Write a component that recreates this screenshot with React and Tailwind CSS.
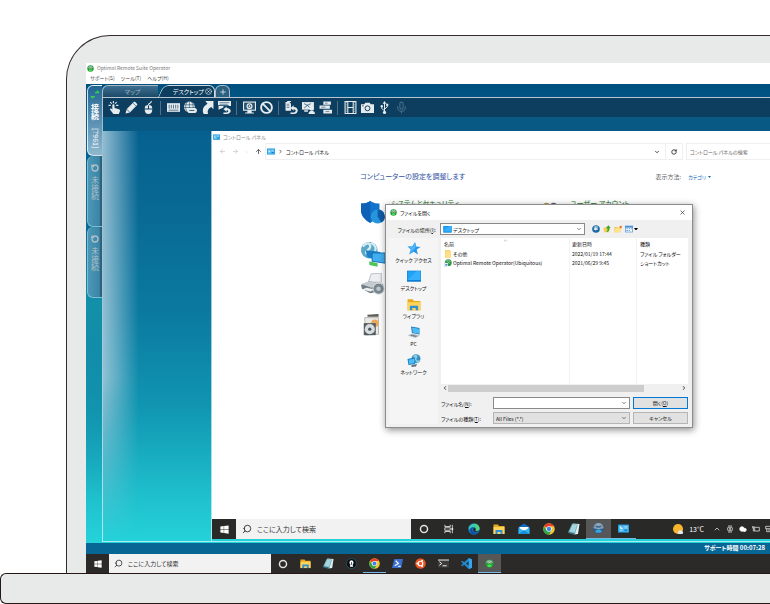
// src/App.jsx

import React, { useState } from 'react';
import {
    ArrowLeft, ArrowRight, ArrowUp, Ban, ChevronDown, ChevronRight, ChevronUp,
    ChevronLeft, Cloud, Mic, Plus, RotateCw, Search, X, XCircle,
} from 'lucide-react';

/* ---------- Small drawings ---------- */

const Windows = ({ className }) => (
    <svg viewBox="0 0 24 24" className={className} fill="#fff">
        <path d="M1 4l9-1.3v8.8H1zM11 2.5L23 1v10.5H11zM1 12.5h9v8.8L1 20zM11 12.5h12V23l-12-1.6z" />
    </svg>
);

const GreenBall = ({ className }) => (
    <svg viewBox="0 0 24 24" className={className}>
        <circle cx="12" cy="12" r="11" fill="#1d9a35" />
        <path d="M2 9a11 11 0 0 1 20 0c-6 4-14 4-20 0z" fill="#6f9a78" />
        <path d="M4 9c4-5 12-5 16 0M7 5l10 8M17 5L7 13" stroke="#d9ecd9" strokeWidth="1.2" fill="none" />
        <ellipse cx="12" cy="18" rx="6" ry="3.5" fill="#4be04f" />
    </svg>
);

const BlueBall = ({ className }) => (
    <svg viewBox="0 0 24 24" className={className}>
        <circle cx="12" cy="12" r="11" fill="#1e5f94" />
        <path d="M1 11a11 11 0 0 1 22 0c-6 4-16 4-22 0z" fill="#89a9c4" />
        <path d="M3 8h18M6 5l12 7M18 5L6 12" stroke="#34506b" strokeWidth="1.2" fill="none" />
        <ellipse cx="12" cy="18" rx="7" ry="3.5" fill="#3da5dc" />
    </svg>
);

const Panel = ({ className }) => (
    <svg viewBox="0 0 24 20" className={className}>
        <rect y="1" width="24" height="18" rx="1" fill="#1d8fd1" />
        <rect x="1.5" y="3" width="21" height="14" fill="#4dbdf3" />
        <circle cx="7.500" cy="8" r="3.500" fill="#d8f0fc" />
        <path d="M7.500 8V4.500A3.500 3.500 0 0 1 11 8z" fill="#1470b8" />
        <path d="M14 6h6M14 9h6M4 14.500h6" stroke="#d8f0fc" strokeWidth="1.200" />
        <rect x="14" y="12" width="6" height="3" fill="#1470b8" />
    </svg>
);

const Desktop = ({ className }) => (
    <svg viewBox="0 0 24 20" className={className}>
        <rect width="24" height="19" fill="#0f7fd6" />
        <path d="M1 1h22v15H1z" fill="#1ea1f6" />
        <path d="M1 16L16 1h7v15z" fill="#36b0fb" />
    </svg>
);

const Folder = ({ className }) => (
    <svg viewBox="0 0 24 22" className={className}>
        <path d="M1 2h9l2 3h11v16H1z" fill="#e8a91c" />
        <path d="M1 7h22v14H1z" fill="#fdd35a" />
        <path d="M5 21v-8h14v8h-4v-4H9v4z" fill="#2f8fd8" />
    </svg>
);

const PlainFolder = ({ className }) => (
    <svg viewBox="0 0 24 24" className={className}>
        <path d="M3 1h14l3 3v19H3z" fill="#f3c74e" />
        <path d="M4 4h15v12l2 2v5H4z" fill="#ffe08a" />
    </svg>
);

const Shortcut = ({ className }) => (
    <svg viewBox="0 0 24 24" className={className}>
        <circle cx="13" cy="11" r="10" fill="#1f9440" />
        <path d="M5 8c5-6 12-5 16 0M8 5l10 9M18 5l-7 9" stroke="#c8e2cf" strokeWidth="1.500" fill="none" />
        <rect x="1" y="12" width="11" height="11" fill="#fff" stroke="#9bb" />
        <path d="M3 21c0-4 2-5 5-5v-2l3 3.500-3 3.500v-2c-2 0-3 0-5 2z" fill="#2665c5" />
    </svg>
);

const Star = ({ className }) => (
    <svg viewBox="0 0 24 24" className={className}>
        <path d="M14 0l2 8.500 8 .5-7 5 2 9-7.500-5L3 23l3-9-6-5.500L9 8z" fill="#2597ea" />
        <path d="M14 2l1 8-5 6-6 5 3-8-5-4 8-.5z" fill="#52b5f6" />
    </svg>
);

const Pc = ({ className }) => (
    <svg viewBox="0 0 28 24" className={className}>
        <path d="M8 0l17 3v13L10 13z" fill="#1676b9" />
        <path d="M10 2l14 2.500v10L11.500 12z" fill="#4fbdf5" />
        <path d="M10 14l16 4-9 5L1 18z" fill="#b9c4cc" />
        <path d="M9 16l12 3-4 2-11-3z" fill="#76848f" />
    </svg>
);

const Network = ({ className }) => (
    <svg viewBox="0 0 28 26" className={className}>
        <circle cx="18" cy="9.500" r="9" fill="#328fc2" />
        <path d="M12 4c4-4 8-3 9 0s-3 4-2 7 6 2 7 0-1 8-6 7z" fill="#8ccbdc" />
        <path d="M1 10l15-3v13L3 22z" fill="#1679bf" />
        <path d="M3 11.500l12-2.500v9.500L4.500 20z" fill="#4dbbf6" />
        <path d="M9 22l11-2-2 5-9 1z" fill="#5c7482" />
    </svg>
);

const Edge = ({ className }) => (
    <svg viewBox="0 0 24 24" className={className}>
        <circle cx="12" cy="12" r="11.500" fill="#1678c8" />
        <path d="M1.500 9C4-1 21-2 23 10c.5 5-4 7-8 5 2-3 0-7-4-7-5 0-7 3-9.500 5z" fill="#3bc8b0" />
        <path d="M13 1c6 1 10 5 10 9.500 0 4-4 6-8 4.500 2-3 2-8-2-14z" fill="#62d65b" opacity=".75" />
        <path d="M11 9c-5 2-3 11 6 11 2 0 4-1 5-2-5 8-20 5-17-5 1-3 4-4 6-4z" fill="#0b4f9c" />
        <path d="M12 9.500c3 0 4 3 2.500 6 3 2 6 1 8 0-3 4-12 4-12-2 0-2 .5-3 1.500-4z" fill="#262626" />
    </svg>
);

const Mail = ({ className }) => (
    <svg viewBox="0 0 24 22" className={className}>
        <path d="M1 7l11-7 11 7v14H1z" fill="#0f6cbd" />
        <path d="M3 7h18v4l-9 5-9-5z" fill="#fff" />
        <path d="M1 8l11 7 11-7v13H1z" fill="#35b4ee" />
        <path d="M1 21l11-8 11 8z" fill="#1690d8" />
    </svg>
);

const Chrome = ({ className }) => (
    <svg viewBox="0 0 24 24" className={className}>
        <circle cx="12" cy="12" r="11.500" fill="#f6c52d" />
        <path d="M12 12L2 6.500A11.500 11.500 0 0 1 22 6.500H12z" fill="#e5402f" />
        <path d="M2 6.500A11.500 11.500 0 0 0 12 23.500l5-9-5 2-5-2z" fill="#2da44f" />
        <circle cx="12" cy="12" r="5.500" fill="#fff" />
        <circle cx="12" cy="12" r="4.300" fill="#3f80ee" />
    </svg>
);

const Notebook = ({ className }) => (
    <svg viewBox="0 0 24 24" className={className}>
        <path d="M9 1l14 1-3 20-8 1z" fill="#e7eef0" />
        <path d="M8 2l12 1-6 19L0 19z" fill="#6fb0bd" />
        <path d="M9 3l9 1-5 15-10-2z" fill="#a5d5dd" />
        <path d="M1 18l13 3-1 3L0 20z" fill="#3a6c7c" />
    </svg>
);

const TaskView = ({ className }) => (
    <svg viewBox="0 0 24 24" className={className} fill="none" stroke="#e8e8e8" strokeWidth="2">
        <path d="M2 2v4h13V2M2 22v-4h13v4M2 9h13v6H2zM20 2v20" />
        <path d="M18 10h4v4h-4z" fill="#fff" stroke="none" />
    </svg>
);

const Ring = ({ className }) => (
    <svg viewBox="0 0 24 24" className={className} fill="none" stroke="#e4e4e4" strokeWidth="3.500">
        <circle cx="12" cy="12" r="8.500" />
    </svg>
);

const KeyApp = ({ className }) => (
    <svg viewBox="0 0 24 24" className={className}>
        <circle cx="12" cy="12" r="11" fill="#0b0f11" stroke="#24535e" strokeWidth="2" />
        <path d="M12 5a5 5 0 0 1 2.500 9l1 5h-7l1-5A5 5 0 0 1 12 5z" fill="#fff" />
        <path d="M12 9v6" stroke="#0b0f11" strokeWidth="1.500" />
    </svg>
);

const PowerShell = ({ className }) => (
    <svg viewBox="0 0 24 24" className={className}>
        <path d="M5 2h19l-4 20H0z" fill="#3a6fd0" />
        <path d="M8 6l6 6-8 5M13 18h6" stroke="#fff" strokeWidth="2.500" fill="none" />
    </svg>
);

const Ubuntu = ({ className }) => (
    <svg viewBox="0 0 24 24" className={className}>
        <circle cx="12" cy="12" r="11.500" fill="#e95420" />
        <circle cx="12" cy="12" r="5" fill="none" stroke="#fff" strokeWidth="2.500" />
        <g fill="#fff"><circle cx="5" cy="12" r="2" /><circle cx="15.500" cy="6" r="2" /><circle cx="15.500" cy="18" r="2" /></g>
    </svg>
);

const Terminal = ({ className }) => (
    <svg viewBox="0 0 24 24" className={className}>
        <path d="M0 3h24v18H0z" fill="#3c3c3c" />
        <path d="M0 3h24v3H0z" fill="#b8b8b8" />
        <path d="M3 8l5 4-5 4M10 17h9" stroke="#fff" strokeWidth="2" fill="none" />
    </svg>
);

const VsCode = ({ className }) => (
    <svg viewBox="0 0 24 24" className={className}>
        <path d="M17 0l7 3v18l-7 3L7 14.500 2.500 18 0 16.500 4.500 12 0 7.500 2.500 6 7 9.500zm0 7l-6 5 6 5z" fill="#1f8ad2" />
        <path d="M17 0l7 3v18l-7 3z" fill="#35a5ee" />
    </svg>
);

const Weather = ({ className }) => (
    <svg viewBox="0 0 24 24" className={className}>
        <circle cx="11" cy="11" r="11" fill="#f8b62d" />
        <path d="M12 22a4 4 0 0 1 0-6 5 5 0 0 1 8-1 4 4 0 0 1 0 7z" fill="#e4e8ee" />
    </svg>
);

/* ---------- Toolbar icons (inherit the text colour) ---------- */

const svgProps = { viewBox: '0 0 24 24', fill: 'currentColor' };

const Touch = ({ className }) => (
    <svg {...svgProps} className={className}>
        <path d="M8 8c0-2.500 4-2.500 4 0v5l8 2c2 .5 2.500 2 2 4l-2 5H10l-6-8c-1-2 1-3 2.500-1.500L8 16z" />
        <path d="M10 0v4M4 2l3 3M1 8h4M16 2l-3 3M19 8h-4" stroke="currentColor" strokeWidth="2" />
    </svg>
);
const Pen = ({ className }) => (
    <svg {...svgProps} className={className}>
        <path d="M1 23l2-8L16 2c1-1 2-1 3 0l3 3c1 1 1 2 0 3L9 21z" />
        <path d="M3 15l6 6M15 4l5 5" stroke="#0d3e60" strokeWidth="1.200" />
    </svg>
);
const MouseIcon = ({ className }) => (
    <svg {...svgProps} className={className}>
        <path d="M5 14c0-5 3-6.500 6-6.500V14zM13 7.500c3 0 6 1.500 6 6.500h-6zM5 15.500h14c0 5-2 8.500-7 8.500s-7-3.500-7-8.500z" />
        <path d="M12 8c-1-6 6-2 5-8" fill="none" stroke="currentColor" strokeWidth="2" />
    </svg>
);
const KeyboardIcon = ({ className }) => (
    <svg {...svgProps} className={className}>
        <path d="M0 4h24v16H0z" />
        <path d="M4 7v7M8 7v7M12 7v7M16 7v7M20 7v7M3 17h18" stroke="#0d3e60" strokeWidth="1.200" />
    </svg>
);
const GlobeKey = ({ className }) => (
    <svg {...svgProps} className={className}>
        <circle cx="10" cy="11" r="10" />
        <path d="M1 7h18M0 12h20M10 1v20M6 2c-4 6-4 12 0 18M14 2c4 6 4 12 0 18" stroke="#0d3e60" strokeWidth="1" fill="none" />
        <path d="M8 13h12c5 0 5 9 0 9H8z" />
        <path d="M10 17.500h9" stroke="#0d3e60" strokeWidth="1.500" />
    </svg>
);
const BigArrow = ({ className }) => (
    <svg {...svgProps} className={className}>
        <path d="M8 0h15v15l-4-4c-6 3-8 7-6 13H5C1 16 5 9 12 5z" />
    </svg>
);
const ScreenBack = ({ className }) => (
    <svg {...svgProps} className={className}>
        <path d="M0 0h24v9h-4V8H0z" />
        <path d="M3 3h18M3 6h15" stroke="#0d3e60" />
        <path d="M1 9h9v3l-9 4zM10 15l6-5v3c10 0 10 11-1 11h-5v-3h5c5 0 5-4 1-4v3z" />
    </svg>
);
const MonitorEye = ({ className }) => (
    <svg {...svgProps} className={className}>
        <path d="M0 1h24v17H0zM8 18h8v3h4v2H4v-2h4z" />
        <path d="M2 3h20v13H2z" fill="#28536f" />
        <circle cx="12" cy="9.500" r="5.500" />
        <circle cx="12" cy="9.500" r="2.500" fill="none" stroke="#0d3e60" strokeWidth="1.500" />
    </svg>
);
const FileBack = ({ className }) => (
    <svg {...svgProps} className={className}>
        <path d="M1 2h7l3 3v13H1zM4 0h7v2H4zM10 13l6-5v3c10 0 10 13 0 13h-6v-3h6c5 0 5-6 0-6v3z" />
        <path d="M3 6h5M3 9h5M3 12h5" stroke="#0d3e60" />
    </svg>
);
const Share = ({ className }) => (
    <svg {...svgProps} className={className}>
        <path d="M0 2h22v14H0z" />
        <path d="M4 5l6 3 6-3M4 13l6-5 4 4" stroke="#0d3e60" strokeWidth="1.300" fill="none" />
        <circle cx="18" cy="14" r="4" /><path d="M12 24c0-8 12-8 12 0zM4 17h7v3H4z" />
    </svg>
);
const Drives = ({ className }) => (
    <svg {...svgProps} className={className}>
        <path d="M8 1h14v6H8zM1 8.500h19v6H1zM8 16h16v7H8z" />
        <path d="M11 4h5M4 11.500h8M12 19.500h7" stroke="#0d3e60" strokeWidth="1" />
    </svg>
);
const FilmIcon = ({ className }) => (
    <svg {...svgProps} className={className} fill="none" stroke="currentColor" strokeWidth="2">
        <path d="M2 1h20v22H2zM7 1v22M17 1v22M7 12h10" />
        <path d="M4.500 2v20M19.500 2v20" strokeDasharray="2 2" strokeWidth="1" />
    </svg>
);
const CameraSolid = ({ className }) => (
    <svg {...svgProps} className={className}>
        <path d="M0 6h6l2-3h8l2 3h6v16H0z" />
        <circle cx="12" cy="13.500" r="4.500" fill="none" stroke="#0d3e60" strokeWidth="1.800" />
        <path d="M2 9h3" stroke="#0d3e60" strokeWidth="1.500" />
    </svg>
);
const UsbIcon = ({ className }) => (
    <svg {...svgProps} className={className}>
        <path d="M12 0l3.500 5h-7z" />
        <path d="M12 3v18M12 18l-5-4v-4M12 15l5-4V8" fill="none" stroke="currentColor" strokeWidth="1.800" />
        <circle cx="12" cy="21" r="3" /><circle cx="7" cy="9.500" r="2.200" /><path d="M15 5h4v4h-4z" />
    </svg>
);

const TOOLBAR = [
    [['タッチ', Touch], ['ペン', Pen], ['マウス', MouseIcon]],
    [['キーボード', KeyboardIcon], ['言語', GlobeKey], ['ショートカット', BigArrow], ['画面', ScreenBack]],
    [['表示', MonitorEye], ['禁止', Ban]],
    [['ファイル', FileBack], ['共有', Share], ['ドライブ', Drives]],
    [['録画', FilmIcon], ['撮影', CameraSolid], ['USB', UsbIcon], ['マイク', Mic]],
];

const PLACES = [
    ['クイック アクセス', Star],
    ['デスクトップ', Desktop],
    ['ライブラリ', Folder],
    ['PC', Pc],
    ['ネットワーク', Network],
];

const FILES = [
    { name: 'その他', date: '2022/01/19 17:44', kind: 'ファイル フォルダー', Icon: PlainFolder },
    { name: 'Optimal Remote Operator(Ubiquitous)', date: '2021/06/29 9:45', kind: 'ショートカット', Icon: Shortcut },
];

const REMOTE_APPS = [Ring, TaskView, Edge, Folder, Mail, Chrome, Notebook, BlueBall, Panel];
const LOCAL_APPS = [Ring, Folder, Notebook, KeyApp, Chrome, PowerShell, Ubuntu, Terminal, VsCode, GreenBall];

/* ---------- Left session tabs ---------- */

function SessionTab({ active, label, code }) {
    return (
        <button
            className={
                active
                    ? 'flex h-[71px] w-full flex-col items-center rounded-l-md border-y border-l border-white/80 bg-gradient-to-b from-[#1f6592] to-[#8fb9d0] pt-1 text-white'
                    : 'flex h-[71px] w-full flex-col items-center rounded-l-md border-b border-l border-[#7fbdd0] bg-gradient-to-r from-[#4d96b6] to-[#3583a3] pt-2 text-[#b0bfc6] shadow-[inset_-2px_0_1px_#315f79]'
            }
        >
            {active ? (
                <svg viewBox="0 0 12 12" className="mb-1 size-[10px]" fill="none" stroke="#35d052" strokeWidth="1.500">
                    <path d="M1 8h5M4 10L1 8M6 3h5M8 1l3 2" />
                </svg>
            ) : (
                <RotateCw className="mb-1 size-[8px] -scale-x-100" strokeWidth={4} />
            )}
            <span className={active ? 'text-[8px] font-bold leading-[9px] [writing-mode:vertical-rl]' : 'text-[8px] leading-[9px] [writing-mode:vertical-rl]'}>
                {label}
            </span>
            {code && <span className="mt-2 text-[7px] leading-[9px] [writing-mode:vertical-rl]">{code}</span>}
        </button>
    );
}

/* ---------- File dialog ---------- */

function OpenDialog() {
    const [fileName, setFileName] = useState('');

    return (
        <div
            role="dialog"
            aria-label="ファイルを開く"
            className="absolute left-[173px] top-[73px] w-[308px] border border-[#8c8c8c] bg-[#f0f0f0] pb-[3px] text-[5px] leading-[9px] text-[#111] shadow-[1px_2px_7px_rgba(0,0,0,0.45)]"
        >
            <div className="flex h-[15px] items-center bg-white pl-1 pr-1.5">
                <GreenBall className="mr-[3px] size-[7px]" />
                <span>ファイルを開く</span>
                <button aria-label="閉じる" className="ml-auto"><X className="size-[7px]" /></button>
            </div>

            <div className="flex h-[18px] items-center">
                <label htmlFor="place" className="w-[54px] pr-1 text-right whitespace-nowrap">ファイルの場所(<u>I</u>):</label>
                <div className="relative flex h-[12px] w-[145px] items-center border border-[#8a8a8a] bg-white">
                    <Desktop className="absolute left-[2px] h-[7px] w-[9px]" />
                    <select id="place" className="h-full w-full appearance-none pl-[12px] outline-none">
                        <option>デスクトップ</option>
                    </select>
                    <ChevronDown className="pointer-events-none absolute right-[2px] size-[6px]" />
                </div>
                <div className="ml-[7px] flex items-center gap-[3px]">
                    <button aria-label="戻る">
                        <svg viewBox="0 0 24 24" className="size-[8px]">
                            <circle cx="12" cy="12" r="11.500" fill="#1f6aa3" />
                            <path d="M4 6a11 9 0 0 1 16 0l-4 3H8z" fill="#7fb4d8" />
                            <path d="M5 12l6-5v3h6v4h-6v3z" fill="#fff" />
                        </svg>
                    </button>
                    <button aria-label="上へ">
                        <svg viewBox="0 0 24 24" className="size-[8px]">
                            <path d="M1 8l12-3 8 2-3 15H3z" fill="#f2d05e" />
                            <path d="M9 21c5-2 5-6 4-11H9l7-9 7 8h-4c1 7-2 12-10 12z" fill="#35a52c" />
                        </svg>
                    </button>
                    <button aria-label="新しいフォルダー">
                        <svg viewBox="0 0 24 24" className="size-[8px]">
                            <path d="M1 6h8l2 2h10l-3 14H1z" fill="#f4c64a" />
                            <path d="M4 10h19l-4 12H1z" fill="#ffe38e" />
                            <circle cx="20" cy="6" r="4" fill="#ef7b3a" />
                        </svg>
                    </button>
                    <button aria-label="表示" className="flex items-center">
                        <svg viewBox="0 0 24 24" className="size-[8px]">
                            <path d="M0 2h24v20H0z" fill="#4b8fd6" />
                            <path d="M2 8h20v12H2z" fill="#fff" />
                            <path d="M4 10h5v3H4zM11 10h4v3h-4zM17 10h4v3h-4zM4 15h5v3H4zM11 15h4v3h-4z" fill="#6aa5e0" />
                        </svg>
                        <svg viewBox="0 0 6 4" className="ml-px w-[4px]"><path d="M0 0h6L3 4z" /></svg>
                    </button>
                </div>
            </div>

            <div className="flex gap-[3px] pl-[3px] pr-1">
                <nav className="flex w-[49px] flex-col bg-[#f5f5f5] pt-1">
                    {PLACES.map(([label, Icon]) => (
                        <button key={label} className="flex h-[28px] flex-col items-center whitespace-nowrap">
                            <Icon className="h-[13px] w-[14px]" />
                            <span>{label}</span>
                        </button>
                    ))}
                </nav>

                <div className="min-w-0 flex-1">
                    <div className="relative flex h-[146px] bg-[linear-gradient(to_right,white_128px,#eef3fa_128px,#eef3fa_129px,white_129px,white_195px,#eef3fa_195px,#eef3fa_196px,white_196px)]">
                        <ChevronUp className="absolute left-[62px] top-0 size-[5px] text-gray-500" />
                        <table className="w-full table-fixed self-start text-left">
                            <colgroup>
                                <col className="w-[128px]" />
                                <col className="w-[67px]" />
                                <col />
                            </colgroup>
                            <thead>
                                <tr className="h-[11px]">
                                    <th className="pl-[3px] font-normal">名前</th>
                                    <th className="pl-[3px] font-normal">更新日時</th>
                                    <th className="pl-1 font-normal">種類</th>
                                </tr>
                            </thead>
                            <tbody>
                                {FILES.map(({ name, date, kind, Icon }) => (
                                    <tr key={name} className="h-[9px] whitespace-nowrap">
                                        <td className="pl-[3px]">
                                            <div className="flex items-center gap-px"><Icon className="size-[8px] shrink-0" />{name}</div>
                                        </td>
                                        <td className="pl-[3px]">{date}</td>
                                        <td className="pl-1">{kind}</td>
                                    </tr>
                                ))}
                            </tbody>
                        </table>
                    </div>
                    <div className="flex h-[8px] items-center justify-between px-px">
                        <ChevronLeft className="size-[6px]" strokeWidth={3} />
                        <div className="mr-auto h-[7px] w-4/5 bg-[#cdcdcd]" />
                        <ChevronRight className="size-[6px]" strokeWidth={3} />
                    </div>

                    <div className="mt-[5px] grid grid-cols-[52px_1fr_55px] items-center gap-y-[3px]">
                        <label htmlFor="file-name">ファイル名(<u>N</u>):</label>
                        <div className="relative mr-[3px] flex h-[12px] items-center border border-[#8a8a8a] bg-white">
                            <input id="file-name" value={fileName} onChange={e => setFileName(e.target.value)} className="h-full w-full px-0.5 outline-none" />
                            <ChevronDown className="absolute right-[2px] size-[6px]" />
                        </div>
                        <button className="h-[12px] border border-[#0078d7] bg-[#e1e1e1] leading-[10px]">開く(<u>O</u>)</button>

                        <label htmlFor="file-type">ファイルの種類(<u>T</u>):</label>
                        <div className="relative mr-[3px] flex h-[12px] items-center border border-[#b5b5b5] bg-[#e1e1e1]">
                            <select id="file-type" className="h-full w-full appearance-none pl-[2px] outline-none">
                                <option>All Files (*.*)</option>
                            </select>
                            <ChevronDown className="pointer-events-none absolute right-[2px] size-[6px]" />
                        </div>
                        <button className="h-[12px] border border-[#b5b5b5] bg-[#e1e1e1] leading-[10px]">キャンセル</button>
                    </div>
                </div>
            </div>
        </div>
    );
}

/* ---------- Remote desktop ---------- */

function ControlPanel() {
    return (
        <div className="relative min-h-0 flex-1 bg-white">
            <div className="flex h-[12px] items-center gap-[3px] pl-px text-[5px] text-[#888]">
                <Panel className="h-[6px] w-[7px]" />
                コントロール パネル
            </div>

            <div className="flex h-[17px] text-[5px] text-[#111]">
                <div className="flex w-[53px] items-center gap-[6px] pl-[7px] text-[#bbb]">
                    <ArrowLeft className="size-[7px]" />
                    <ArrowRight className="size-[7px]" />
                    <ChevronDown className="size-[4px]" />
                    <ArrowUp className="size-[7px] text-[#555]" strokeWidth={3} />
                </div>
                <div className="flex flex-1 items-center gap-[3px] border border-[#efefef] pl-px">
                    <Panel className="h-[7px] w-[8px]" />
                    <ChevronRight className="size-[5px]" strokeWidth={3} />
                    コントロール パネル
                    <ChevronDown className="ml-auto mr-[5px] size-[6px]" strokeWidth={3} />
                </div>
                <button aria-label="更新" className="mr-[3px] flex w-[17px] items-center justify-center border border-l-0 border-[#efefef]">
                    <RotateCw className="size-[6px]" strokeWidth={3} />
                </button>
                <input
                    aria-label="検索"
                    placeholder="コントロール パネルの検索"
                    className="w-[84px] border border-r-0 border-[#efefef] px-[3px] outline-none placeholder-[#666]"
                />
            </div>

            <div className="mt-[11px] flex h-[11px] items-center pl-[148px] pr-[59px]">
                <h1 className="text-[7px] text-[#2f52a3]">コンピューターの設定を調整します</h1>
                <p className="ml-auto text-[6px] text-[#666]">表示方法:</p>
                <button className="ml-[7px] flex items-center gap-[2px] text-[5px] text-[#0f66bf]">
                    カテゴリ
                    <svg viewBox="0 0 6 4" className="w-[3px]" fill="currentColor"><path d="M0 0h6L3 4z" /></svg>
                </button>
            </div>

            {/* Categories, mostly covered by the dialog */}
            <div className="mt-[17px] flex pl-[149px]">
                <div className="flex w-[24px] flex-col">
                    <svg viewBox="0 0 26 28" className="w-[24px]">
                        <path d="M10 2c4 3 7 3 10 3v7c0 7-5 11-10 14C5 23 0 19 0 12V5c3 0 7 0 10-3z" fill="#1273cc" />
                        <path d="M10 2v24C5 23 0 19 0 12V5c3 0 7 0 10-3z" fill="#0d62b7" />
                        <circle cx="18" cy="19" r="7.500" fill="#2695dc" />
                        <path d="M18 19v-7.500a7.500 7.500 0 0 1 4 14z" fill="#0f5ca8" />
                    </svg>
                    <svg viewBox="0 0 26 28" className="mt-4 w-[24px]">
                        <circle cx="9" cy="10" r="9" fill="#5aa7c8" />
                        <path d="M2 6c4-5 8-4 8 0S4 10 6 14M11 2c5 3 6 6 4 9" stroke="#d8ecf3" strokeWidth="2.500" fill="none" />
                        <path d="M5 10l16 2v9L7 18z" fill="#1b80c8" />
                        <path d="M12 13h14v11l-14-2z" fill="#42aef0" stroke="#1370b0" />
                        <path d="M9 22l9 2v4l-9-2z" fill="#4fc45a" />
                    </svg>
                    <svg viewBox="0 0 26 24" className="mt-1.5 w-[24px]">
                        <path d="M11 1l11-1v10H8z" fill="#eceff1" stroke="#b4bbc0" />
                        <path d="M0 13l9-4 15 3v7l-14 3L1 17z" fill="#737d85" />
                        <path d="M0 12l9-3 15 3-13 4z" fill="#c4cbd0" />
                        <path d="M1 18l9 2 5-2-9-2z" fill="#eceff1" />
                        <circle cx="19" cy="17" r="6" fill="#7a858d" stroke="#dfe3e6" />
                        <circle cx="19" cy="17" r="2.500" fill="#b9c8d2" />
                    </svg>
                    <svg viewBox="0 0 26 26" className="mt-[18px] w-[24px]">
                        <path d="M7 2l12-1v3H7z" fill="#5b5b58" />
                        <path d="M4 5h15v18l-14 1z" fill="#e9e9e5" stroke="#b5b5b0" />
                        <circle cx="15" cy="11" r="4" fill="#e9a95b" />
                        <rect x="3" y="11" width="13" height="13" fill="#555c60" />
                        <circle cx="9.500" cy="17.500" r="5.500" fill="#d6dde0" />
                        <circle cx="9.500" cy="17.500" r="1.800" fill="#4b5357" />
                    </svg>
                </div>
                <div className="-mt-[2px] ml-[6px] flex flex-1 items-start text-[7px] leading-[12px] text-[#1c6f2d]">
                    <a href="#system" className="w-[151px]">システムとセキュリティ</a>
                    <svg viewBox="0 0 18 10" className="mt-[4px] w-[16px]">
                        <circle cx="5" cy="6" r="4" fill="#b09a4f" /><circle cx="13" cy="6" r="4" fill="#5a5f66" />
                    </svg>
                    <a href="#user" className="ml-[12px]">ユーザー アカウント</a>
                </div>
            </div>

            <OpenDialog />
        </div>
    );
}

function RemoteTaskbar() {
    return (
        <div className="flex h-[20px] shrink-0 items-center overflow-hidden bg-[#292927] text-[7px] text-white">
            <button aria-label="スタート" className="flex w-[24px] shrink-0 justify-center"><Windows className="size-[9px]" /></button>
            <label className="flex h-full w-[175px] shrink-0 items-center gap-[5px] bg-[#f2f2f2] pl-[6px] text-[#222]">
                <Search className="size-[10px] shrink-0 -scale-x-100" />
                <input aria-label="検索" placeholder="ここに入力して検索" className="w-full outline-none placeholder-[#333]" />
            </label>
            {REMOTE_APPS.map((Icon, i) => (
                <button
                    key={i}
                    aria-label={`アプリ ${i + 1}`}
                    className={
                        i === 7 ? 'flex h-full w-[25px] shrink-0 items-center justify-center border-b border-[#76b9ed] bg-[#575757]'
                            : i === 8 ? 'flex h-full w-[25px] shrink-0 items-center justify-center border-b border-[#76b9ed]'
                                : 'flex h-full w-[25px] shrink-0 items-center justify-center'
                    }
                >
                    <Icon className={i < 2 ? 'size-[10px]' : i > 6 ? 'size-[11px]' : 'size-[12px]'} />
                </button>
            ))}
            <div className="-mr-[3px] ml-auto flex shrink-0 items-center gap-[5px]">
                <Weather className="size-[11px]" />
                <span className="mr-[4px]">13°C</span>
                <ChevronUp className="size-[8px]" />
                <svg viewBox="0 0 24 24" className="size-[8px]" fill="none" stroke="#fff" strokeWidth="2">
                    <rect x="5" y="7" width="14" height="10" rx="2" /><circle cx="12" cy="12" r="2" /><path d="M6 3h12M6 21h12" />
                </svg>
                <Cloud className="size-[8px]" fill="#fff" />
                <svg viewBox="0 0 24 24" className="size-[8px]" fill="none" stroke="#fff" strokeWidth="2">
                    <path d="M8 7h14v11H8zM2 3v6h4V3M4 9v9h4" />
                </svg>
                <svg viewBox="0 0 24 24" className="size-[8px]" fill="none" stroke="#fff" strokeWidth="2">
                    <path d="M22 4H2v7h20zM5 11v9h14M8 15h8" />
                </svg>
            </div>
        </div>
    );
}

/* ---------- Operator window ---------- */

function Operator() {
    return (
        <div className="flex min-h-0 flex-1 bg-[linear-gradient(to_bottom,#00507f_0%,#066291_12%,#086893_25%,#0b7aa0_50%,#1095b1_70%,#1fc0cd_90%,#25d3da_100%)] pb-px">
            <aside className="w-[16px] shrink-0 bg-[linear-gradient(to_bottom,transparent_35%,#1390aa_48%,transparent_90%)] pl-px pt-px">
                <SessionTab active label="接続" code="[7961]" />
                <SessionTab label="未接続" />
                <SessionTab label="未接続" />
            </aside>

            <main className="flex min-w-0 flex-1 flex-col">
                <div className="flex h-[13px] items-end pt-px text-[6px] leading-[11px]">
                    <button className="h-full w-[56px] rounded-tl-md border-l border-t border-white/60 bg-gradient-to-b from-[#3d6f90] to-[#1c4a69] pl-1 text-[#9fb4c1]">マップ</button>
                    <button className="relative h-full w-[57px] text-white">
                        <span className="absolute inset-y-0 left-0 right-1/2 origin-bottom -skew-x-[24deg] rounded-tl-md border-l border-t border-white/80 bg-[#0d3e60]" />
                        <span className="absolute inset-y-0 left-1/4 right-0 rounded-tr-md border-r border-t border-white/80 bg-[#0d3e60]" />
                        <span className="relative flex items-center justify-end gap-px pr-[3px] whitespace-nowrap">デスクトップ<XCircle className="size-[7px]" /></span>
                    </button>
                    <button aria-label="追加" className="flex h-full w-[15px] items-center justify-center rounded-t-md border border-b-0 border-white/60 bg-[#2b607f] text-white">
                        <Plus className="size-[8px]" />
                    </button>
                </div>

                <div className="flex h-[20px] shrink-0 items-center border-l border-t border-white/70 bg-[#0d3e60] pl-[3px] text-[#e6ebee]">
                    {TOOLBAR.map((group, g) => (
                        <React.Fragment key={g}>
                            {g > 0 && <span className="mx-[3px] h-[14px] w-[2px] shrink-0 border-l border-[#4d7186]" />}
                            {group.map(([label, Icon]) => (
                                <button key={label} aria-label={label} className="flex w-[17px] shrink-0 justify-center">
                                    <Icon
                                        className={label === 'マイク' ? 'size-[13px] text-[#456e87]' : 'size-[13px]'}
                                        {...(label === '禁止' ? { strokeWidth: 3.5 } : {})}
                                    />
                                </button>
                            ))}
                        </React.Fragment>
                    ))}
                </div>

                <div className="flex min-h-0 flex-1 flex-col border-b border-l border-white/60">
                    <div className="h-[14px] shrink-0 bg-[#085a84]" />
                    <div className="flex min-h-0 flex-1">
                        <div className="w-[108px] shrink-0">
                            <div className="h-full w-[36px] bg-gradient-to-r from-[#a9ccdc]/85 to-transparent [mask-image:linear-gradient(to_bottom,black_60%,transparent)]" />
                        </div>
                        <div className="flex min-w-0 flex-1 flex-col border-l border-white/60 pb-[2px]">
                            <ControlPanel />
                            <RemoteTaskbar />
                        </div>
                    </div>
                </div>
            </main>
        </div>
    );
}

export default function App() {
    return (
        <div className="flex h-screen flex-col overflow-hidden bg-white pt-[35px] font-['Noto_Sans_CJK_JP',sans-serif] [font-feature-settings:'palt']">
            <div className="ml-[66px] flex min-h-0 flex-1 flex-col rounded-tl-[44px] border-l border-t border-[#332c2b] bg-[#e8eaea] pl-[19px] pt-[27px]">
                <div className="flex min-h-0 flex-1 flex-col bg-white">
                    <header className="h-[21px] shrink-0 pl-px text-[5px] leading-[10px] text-[#444]">
                        <div className="flex items-center gap-[3px] text-[#777]">
                            <GreenBall className="size-[7px]" />
                            Optimal Remote Suite Operator
                        </div>
                        <nav className="flex gap-[6px] pl-[3px]">
                            <button>サポート(S)</button>
                            <button>ツール(T)</button>
                            <button>ヘルプ(H)</button>
                        </nav>
                    </header>

                    <Operator />

                    <div className="h-[11px] shrink-0 bg-[#086694] pr-[5px] text-right text-[6px] font-bold leading-[10px] text-white">
                        サポート時間 00:07:28
                    </div>

                    <div className="flex h-[19px] shrink-0 items-center bg-[#2c2a29] text-[6px]">
                        <button aria-label="スタート" className="flex w-[23px] justify-center"><Windows className="size-[8px]" /></button>
                        <label className="flex h-full w-[162px] items-center gap-[5px] bg-[#f2f2f2] pl-[5px] text-[#222]">
                            <Search className="size-[9px] shrink-0 -scale-x-100" />
                            <input aria-label="検索" placeholder="ここに入力して検索" className="w-full outline-none placeholder-[#333]" />
                        </label>
                        {LOCAL_APPS.map((Icon, i) => (
                            <button
                                key={i}
                                aria-label={`アプリ ${i + 1}`}
                                className={
                                    i === 9 ? 'flex h-full w-[23px] items-center justify-center border-b border-[#76b9ed] bg-[#575757]'
                                        : i === 4 ? 'flex h-full w-[23px] items-center justify-center border-b border-[#76b9ed]'
                                            : 'flex h-full w-[23px] items-center justify-center'
                                }
                            >
                                <Icon className={i === 0 ? 'size-[10px]' : i === 9 ? 'size-[9px]' : 'size-[11px]'} />
                            </button>
                        ))}
                    </div>
                </div>
            </div>

            {/* Laptop base */}
            <div className="h-[31px] shrink-0 rounded-l-md border border-r-0 border-[#231815] bg-[#e8eaea]" />
        </div>
    );
}
